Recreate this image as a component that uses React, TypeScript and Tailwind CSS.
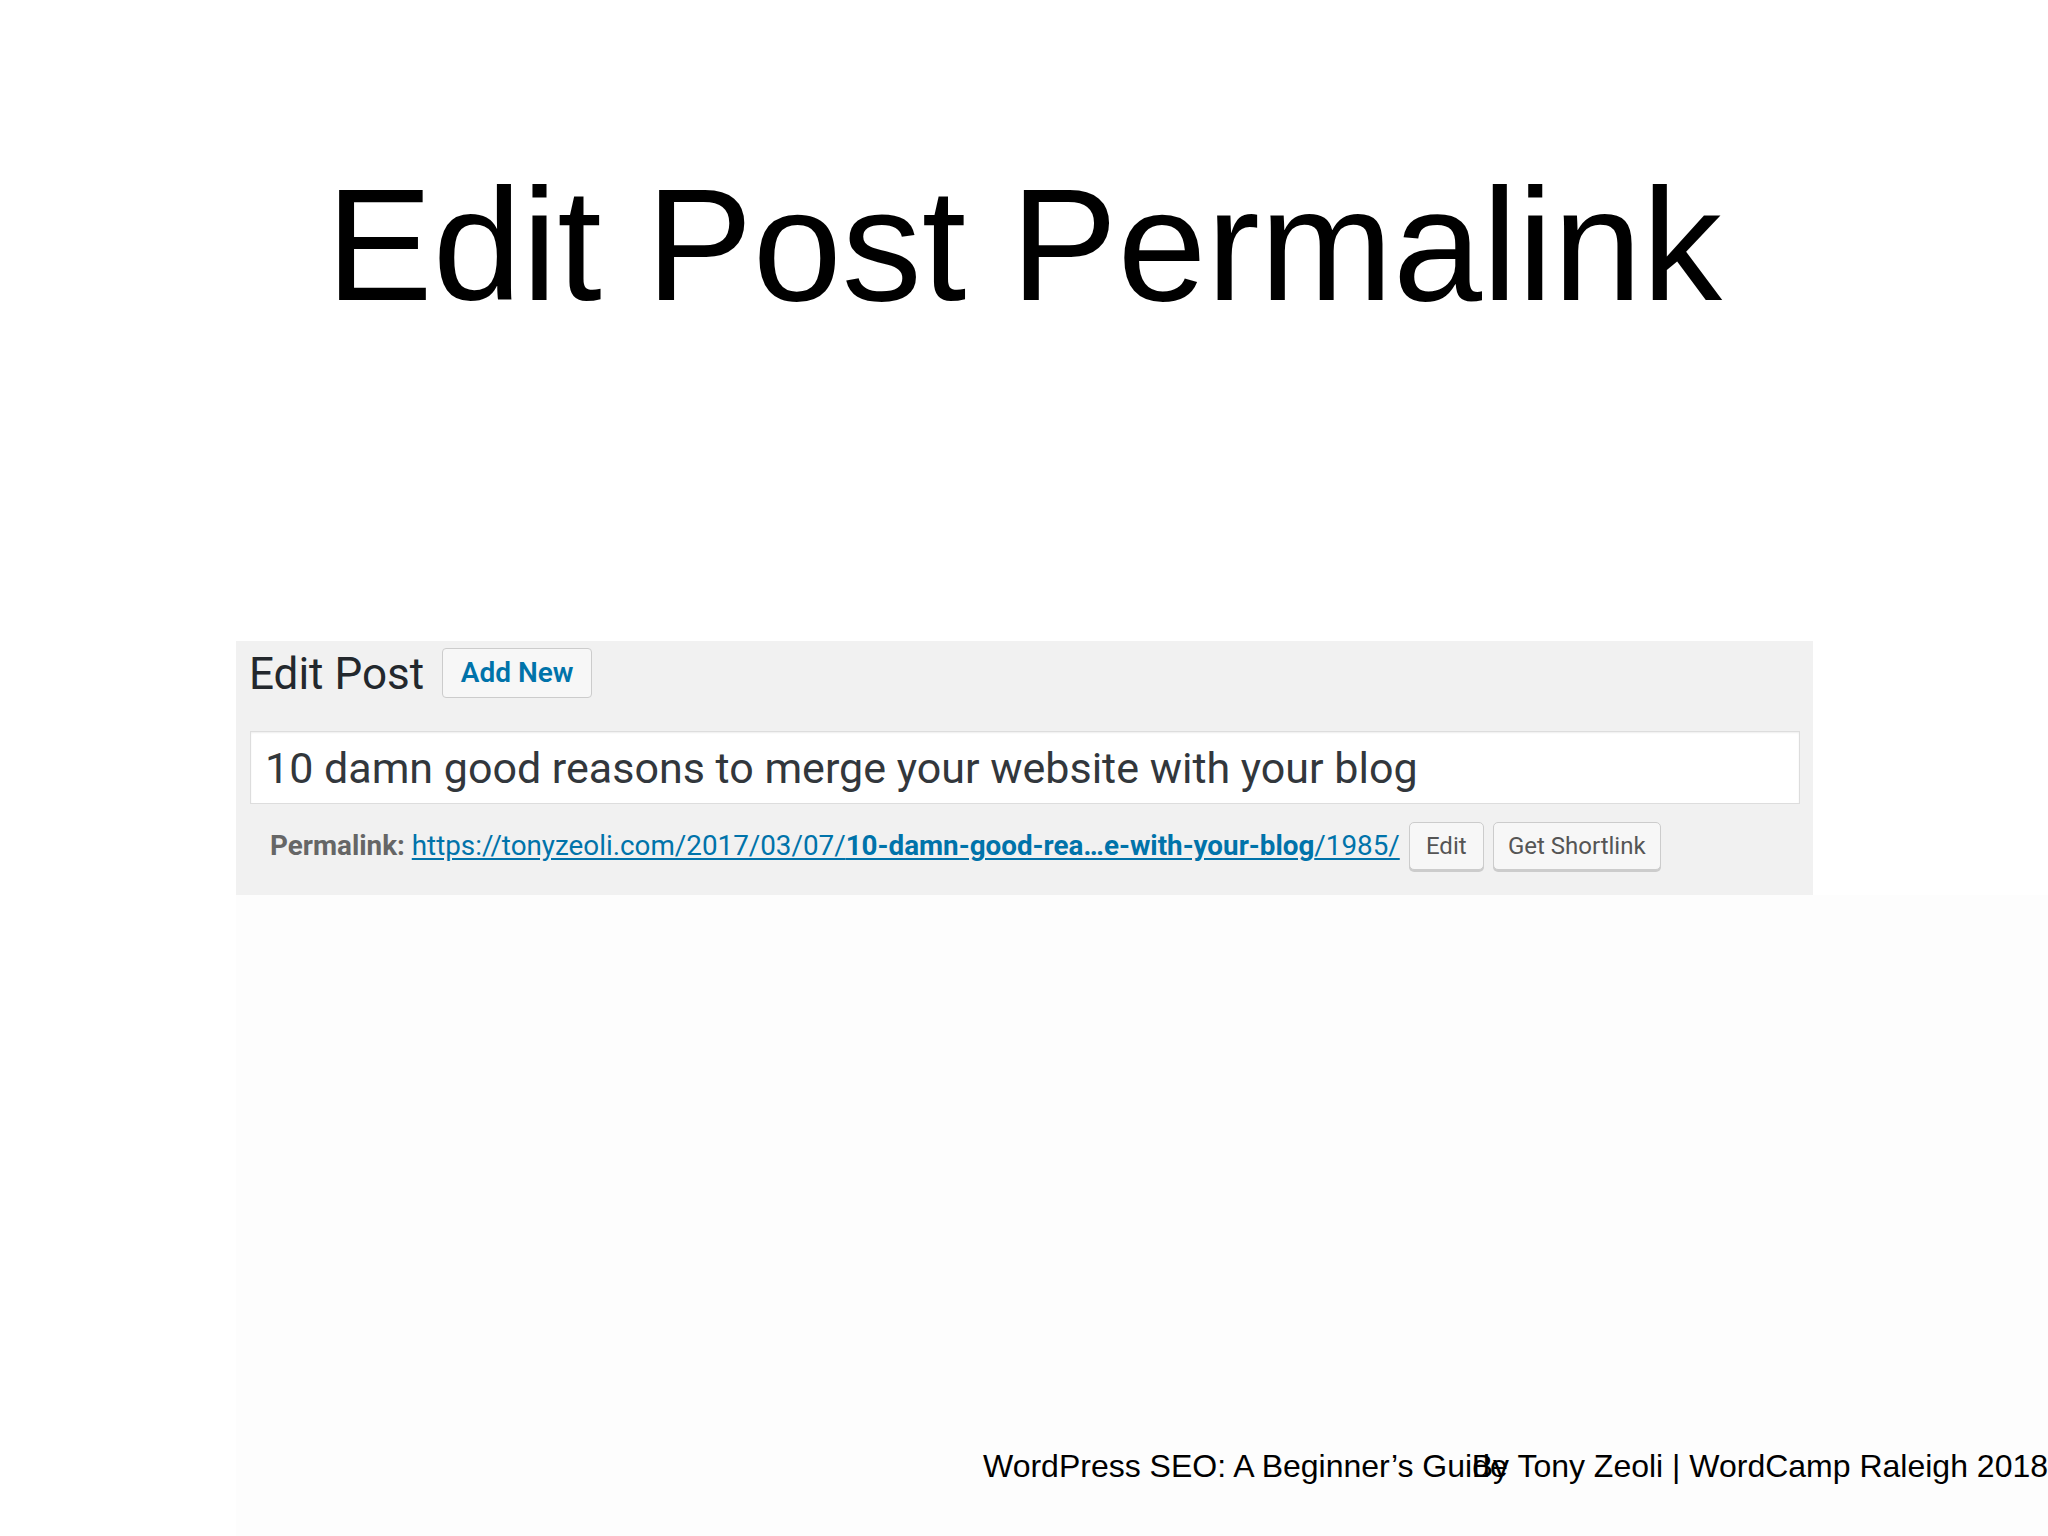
const wp = { fontFamily: "Roboto, 'Noto Sans', sans-serif" };
const slide = { fontFamily: "'Liberation Sans', Arial, sans-serif" };

export default function App() {
  return (
    <div className="w-[2048px] h-[1536px] bg-white overflow-hidden flex flex-col">
      {/* Slide title */}
      <h1
        style={slide}
        className="pt-[165px] text-[160px] leading-none text-center text-black whitespace-nowrap"
      >
        Edit Post Permalink
      </h1>

      {/* WordPress screenshot */}
      <div
        style={wp}
        className="mt-[316px] ml-[236px] w-[1577px] h-[254px] shrink-0 bg-[#f1f1f1] px-[13px] pt-[7px] flex flex-col"
      >
        <div className="flex items-start">
          <div className="text-[44px] leading-[50px] mt-[1px] text-[#23282d]">
            Edit Post
          </div>
          <div className="ml-[18px] h-[50px] w-[150px] border border-[#cccccc] bg-[#f7f7f7] rounded-[4px] text-center text-[28px] leading-[48px] font-semibold text-[#0073aa]">
            Add New
          </div>
        </div>

        <div className="mt-[32px] ml-[1px] w-[1550px] h-[73px] border border-[#dddddd] bg-white shadow-[inset_0_1px_2px_rgba(0,0,0,0.07)] pl-[14px] pt-[3px]">
          <div className="text-[43px] leading-[67px] text-[#32373c] whitespace-nowrap">
            10 damn good reasons to merge your website with your blog
          </div>
        </div>

        <div className="mt-[18px] ml-[21px] flex items-start h-[48px]">
          <div className="text-[27.8px] leading-[48px] whitespace-nowrap">
            <span className="font-bold text-[#666666]">Permalink:</span>{" "}
            <span className="text-[#0073aa] underline underline-offset-[3px]">
              https://tonyzeoli.com/2017/03/07/
              <span className="font-bold">10-damn-good-rea…e-with-your-blog</span>
              /1985/
            </span>
          </div>
          <div className="ml-[9px] h-[48px] w-[75px] shrink-0 border border-[#cccccc] bg-[#f7f7f7] rounded-[5px] shadow-[0_2px_0_#cccccc] flex items-center justify-center text-[24px] text-[#555555]">
            Edit
          </div>
          <div className="ml-[9px] h-[48px] w-[168px] shrink-0 border border-[#cccccc] bg-[#f7f7f7] rounded-[5px] shadow-[0_2px_0_#cccccc] flex items-center justify-center text-[24px] text-[#555555] whitespace-nowrap">
            Get Shortlink
          </div>
        </div>
      </div>

      {/* faint area below the screenshot + footer */}
      <div className="flex-1 ml-[236px] bg-[#fdfdfd] flex flex-col justify-end pb-[54px]">
        <div
          style={slide}
          className="ml-[747px] flex text-[32px] leading-none text-black whitespace-nowrap"
        >
          <span>WordPress SEO: A Beginner’s Guide</span>
          <span className="-ml-[36px]">By Tony Zeoli | WordCamp Raleigh 2018</span>
        </div>
      </div>
    </div>
  );
}
